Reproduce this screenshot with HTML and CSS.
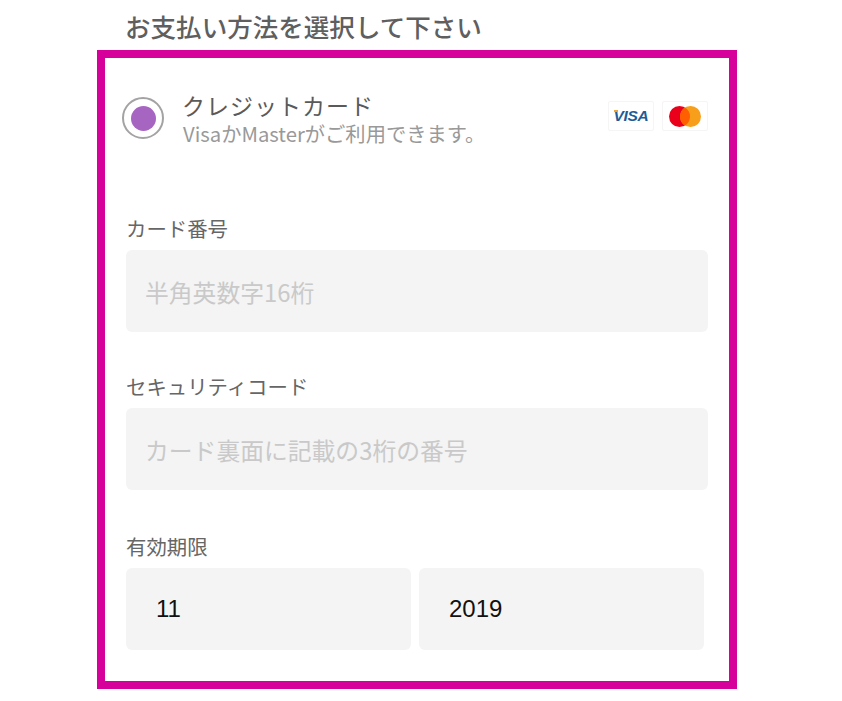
FILE: index.html
```html
<!DOCTYPE html>
<html lang="ja">
<head>
  <meta charset="UTF-8"/>
  <meta name="viewport" content="width=device-width, initial-scale=1.0"/>
  <title>お支払い方法</title>
  <link rel="stylesheet" href="styles.css"/>
</head>
<body>
  <main class="payment">
    <h2 class="payment-title">お支払い方法を選択して下さい</h2>

    <form class="payment-box">
      <div class="method">
        <span class="radio"><span class="radio-dot"></span></span>
        <div class="method-text">
          <div class="method-name">クレジットカード</div>
          <div class="method-note">VisaかMasterがご利用できます。</div>
        </div>
        <div class="brands">
          <span class="brand visa"><span class="visa-flick"></span>VISA</span>
          <span class="brand">
            <svg width="32" height="21" viewBox="0 0 32 21">
              <circle cx="10.5" cy="10.5" r="10.5" fill="#eb001b"/>
              <circle cx="21.5" cy="10.5" r="10.5" fill="#f79e1b"/>
              <path d="M16 1.55a10.5 10.5 0 0 1 0 17.9a10.5 10.5 0 0 1 0-17.9z" fill="#ff5f00"/>
            </svg>
          </span>
        </div>
      </div>

      <div class="field">
        <label class="field-label">カード番号</label>
        <div class="input placeholder">半角英数字16桁</div>
      </div>

      <div class="field">
        <label class="field-label">セキュリティコード</label>
        <div class="input placeholder">カード裏面に記載の3桁の番号</div>
      </div>

      <div class="field field-expiry">
        <label class="field-label">有効期限</label>
        <div class="expiry">
          <div class="input value">11</div>
          <div class="input value">2019</div>
        </div>
      </div>
    </form>
  </main>
</body>
</html>
```

FILE: styles.css
```css
* {
  box-sizing: border-box;
  margin: 0;
  padding: 0;
}

body {
  background: #fff;
  color: #555;
  font-family: "Noto Sans CJK JP", "Noto Sans", sans-serif;
}

.payment {
  width: 640px;
  margin-left: 97px;
}

.payment-title {
  height: 50px;
  padding: 8px 0 0 28px;
  font-size: 25.55px;
  line-height: 36px;
  font-weight: 500;
  color: #5f5f5f;
}

.payment-box {
  height: 639px;
  border: 8px solid #d6009b;
  padding: 0 21px;
}

/* Method row */
.method {
  display: flex;
  align-items: center;
  height: 122px;
  margin-left: -4px;
}
.radio {
  display: flex;
  align-items: center;
  justify-content: center;
  width: 42px;
  height: 42px;
  margin-top: -2px;
  border: 2px solid #a3a3a3;
  border-radius: 50%;
  flex-shrink: 0;
}
.radio-dot {
  width: 25px;
  height: 25px;
  border-radius: 50%;
  background: #a765c2;
}
.method-text {
  flex: 1;
  margin-left: 19px;
  margin-top: -2px;
}
.method-name {
  margin-left: -1px;
  font-size: 23px;
  line-height: 30px;
  letter-spacing: 1px;
  color: #5a5a5a;
}
.method-note {
  font-size: 20.3px;
  line-height: 26px;
  color: #999;
}
.brands {
  display: flex;
  gap: 8px;
  margin-top: -6px;
}
.brand {
  position: relative;
  display: flex;
  align-items: center;
  justify-content: center;
  width: 46px;
  height: 30px;
  border: 1px solid #f5f5f5;
  border-radius: 2px;
}
.visa {
  font-family: "Liberation Sans", sans-serif;
  font-size: 15.5px;
  font-weight: 700;
  font-style: italic;
  letter-spacing: -0.3px;
  color: #1d5c98;
}
.visa-flick {
  position: absolute;
  left: 5px;
  top: 8px;
  width: 4px;
  height: 2px;
  background: #e8a33d;
}

/* Fields */
.field {
  margin-top: 42px;
}
.method + .field {
  margin-top: 36px;
}
.field-expiry {
  margin-top: 44px;
}
.field-label {
  display: block;
  height: 34px;
  font-size: 20.4px;
  line-height: 24px;
  color: #666;
}
.input {
  display: flex;
  align-items: center;
  height: 82px;
  border-radius: 6px;
  background: #f4f4f4;
}
.placeholder {
  padding-left: 19px;
  font-size: 23.8px;
  color: #c9c9c9;
}
.expiry {
  display: flex;
  gap: 8px;
  width: 578px;
}
.value {
  flex: 1;
  padding-left: 30px;
  font-family: "Liberation Sans", sans-serif;
  font-size: 24px;
  color: #111;
}
```
